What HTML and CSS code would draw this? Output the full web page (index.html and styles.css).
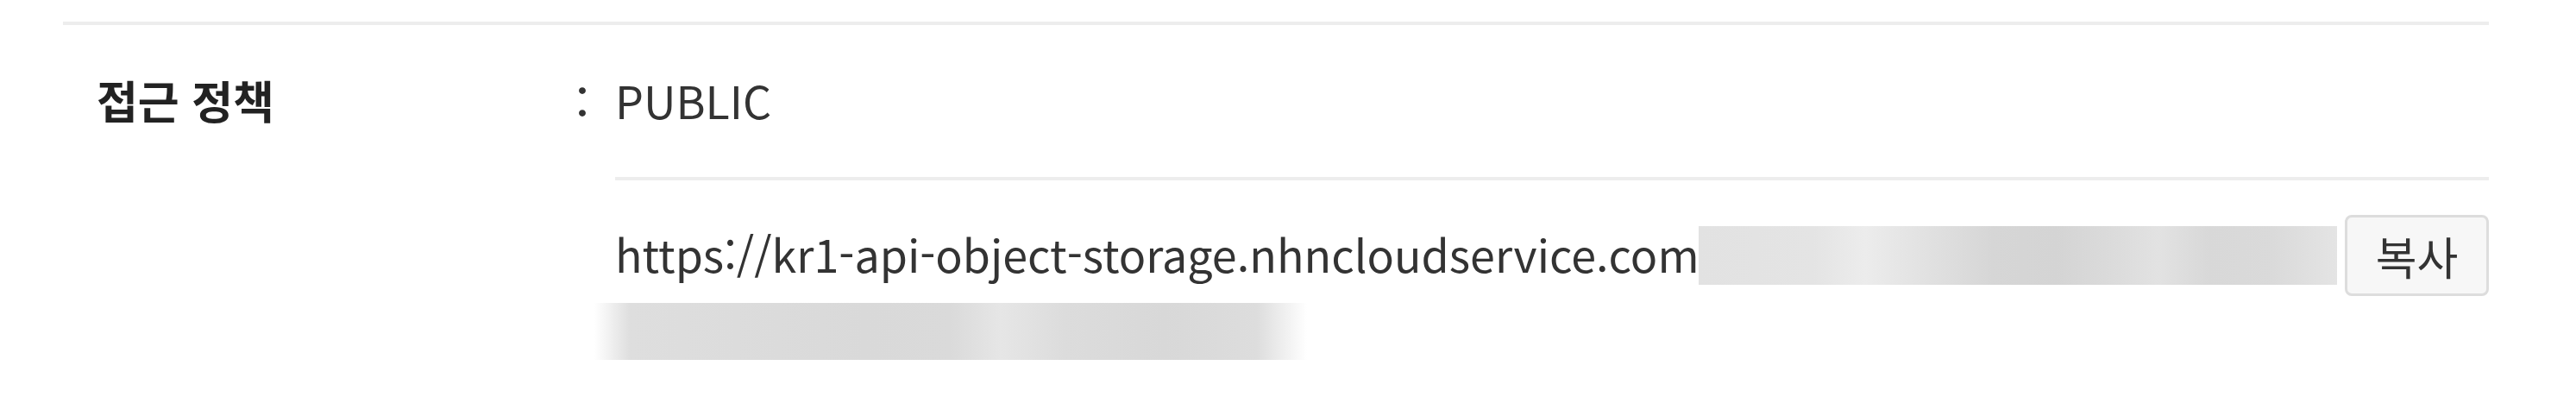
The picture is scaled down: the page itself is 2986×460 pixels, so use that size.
FILE: index.html
```html
<!DOCTYPE html>
<html lang="ko">
<head>
<meta charset="utf-8">
<title>접근 정책</title>
<link rel="stylesheet" href="styles.css">
</head>
<body>
<section class="panel">
  <div class="row">
    <div class="label">접근 정책</div>
    <div class="colon">：</div>
    <div class="value">
      <div class="public">PUBLIC</div>
      <div class="url-row">
        <div class="url">
          <div class="url-line">https://kr1-api-object-storage.nhncloudservice.com/<span class="redact redact-1"></span></div>
          <div class="redact redact-2"></div>
        </div>
        <button class="copy" type="button">복사</button>
      </div>
    </div>
  </div>
</section>
</body>
</html>
```
FILE: styles.css
```css
html, body {
  margin: 0;
  padding: 0;
  background: #ffffff;
}
body {
  font-family: "Noto Sans CJK KR", "Noto Sans", sans-serif;
  font-size: 52px;
  color: #333333;
}
.panel {
  margin: 25px 0 0 73px;
  width: 2812px;
  border-top: 4px solid #ededed;
}
.row {
  display: grid;
  grid-template-columns: 537px 64px minmax(0, 1fr);
  padding-left: 39px;
}
.label {
  padding-top: 48px;
  line-height: 78px;
  font-weight: 700;
  color: #222222;
}
.colon {
  padding-top: 48px;
  line-height: 78px;
  color: #333333;
}
.public {
  padding-top: 48px;
  padding-bottom: 50px;
  line-height: 78px;
  border-bottom: 4px solid #ededed;
}
.url-row {
  display: flex;
  align-items: flex-start;
  padding-top: 41px;
}
.url {
  flex: 1;
  min-width: 0;
}
.url-line {
  line-height: 88px;
  height: 88px;
  white-space: nowrap;
}
.redact {
  display: inline-block;
}
.redact-1 {
  width: 740px;
  height: 68px;
  margin-left: -21px;
  vertical-align: -14px;
  background: linear-gradient(to right,
    #e2e2e2 0%, #e4e4e4 18%, #ececec 26%, #e3e3e3 34%,
    #d6d6d6 46%, #d4d4d4 56%, #dcdcdc 66%, #e2e2e2 72%,
    #d8d8d8 80%, #dadada 90%, #e4e4e4 100%);
}
.redact-2 {
  display: block;
  width: 826px;
  height: 66px;
  margin: 13px 0 0 -24px;
  background: linear-gradient(to right,
    rgba(220,220,220,0) 0%, #dedede 5%, #dcdcdc 20%, #d9d9d9 38%,
    #dadada 50%, #e6e6e6 57%, #dcdcdc 66%, #d8d8d8 80%,
    #dddddd 93%, rgba(222,222,222,0) 100%);
}
.copy {
  flex: none;
  width: 167px;
  height: 94px;
  margin: -1px 0 0 10px;
  padding: 0;
  display: flex;
  align-items: center;
  justify-content: center;
  font-family: "Noto Sans CJK KR", sans-serif;
  font-size: 52px;
  color: #333333;
  background: #f7f7f7;
  border: 3px solid #dddddd;
  border-radius: 8px;
}
```
